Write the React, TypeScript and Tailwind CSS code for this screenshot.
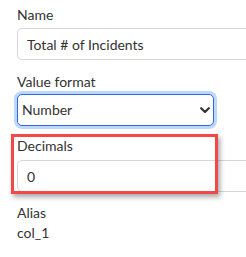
import { useState } from "react";

export default function App() {
  const [name, setName] = useState("Total # of Incidents");
  const [format, setFormat] = useState("Number");
  const [decimals, setDecimals] = useState("0");

  return (
    <div className="relative h-[257px] w-[246px] overflow-hidden bg-white pl-[17px] pt-[5px] font-['Lato',sans-serif] text-[14px] leading-[20px] text-[#333]">
      <label className="block">Name</label>
      <input
        value={name}
        onChange={(e) => setName(e.target.value)}
        className="mt-[3px] block h-[32px] w-[260px] rounded-[5px] border border-[#d6d6d6] bg-white px-[9px] text-[14px] text-[#333] outline-none"
      />

      <label className="mt-[12px] block">Value format</label>
      <div className="relative mt-[2px] w-[197px]">
        <select
          value={format}
          onChange={(e) => setFormat(e.target.value)}
          className="block h-[32px] w-full appearance-none rounded-[5px] border border-[#2f68dc] bg-white pl-[4px] text-[14px] text-[#333] outline-none ring-[3px] ring-[#bed7fc]"
        >
          <option>Number</option>
          <option>Percent</option>
          <option>Currency</option>
        </select>
        <svg
          className="pointer-events-none absolute left-[183px] top-[13px]"
          width="10"
          height="7"
          viewBox="0 0 10 7"
        >
          <polyline
            points="1.2,1.2 5,5 8.8,1.2"
            fill="none"
            stroke="#333"
            strokeWidth="2.2"
            strokeLinecap="round"
            strokeLinejoin="round"
          />
        </svg>
      </div>

      <label className="mt-[10px] block">Decimals</label>
      <input
        value={decimals}
        onChange={(e) => setDecimals(e.target.value)}
        className="mt-[4px] block h-[32px] w-[260px] rounded-[5px] border border-[#d6d6d6] bg-white px-[9px] text-[14px] text-[#333] outline-none"
      />

      <div className="mt-[11px]">Alias</div>
      <div>col_1</div>

      <div className="pointer-events-none absolute left-[11px] top-[134px] h-[60px] w-[207px] border-[3px] border-[#f24848] shadow-[2px_3px_5px_rgba(0,0,0,0.35)]" />
    </div>
  );
}
